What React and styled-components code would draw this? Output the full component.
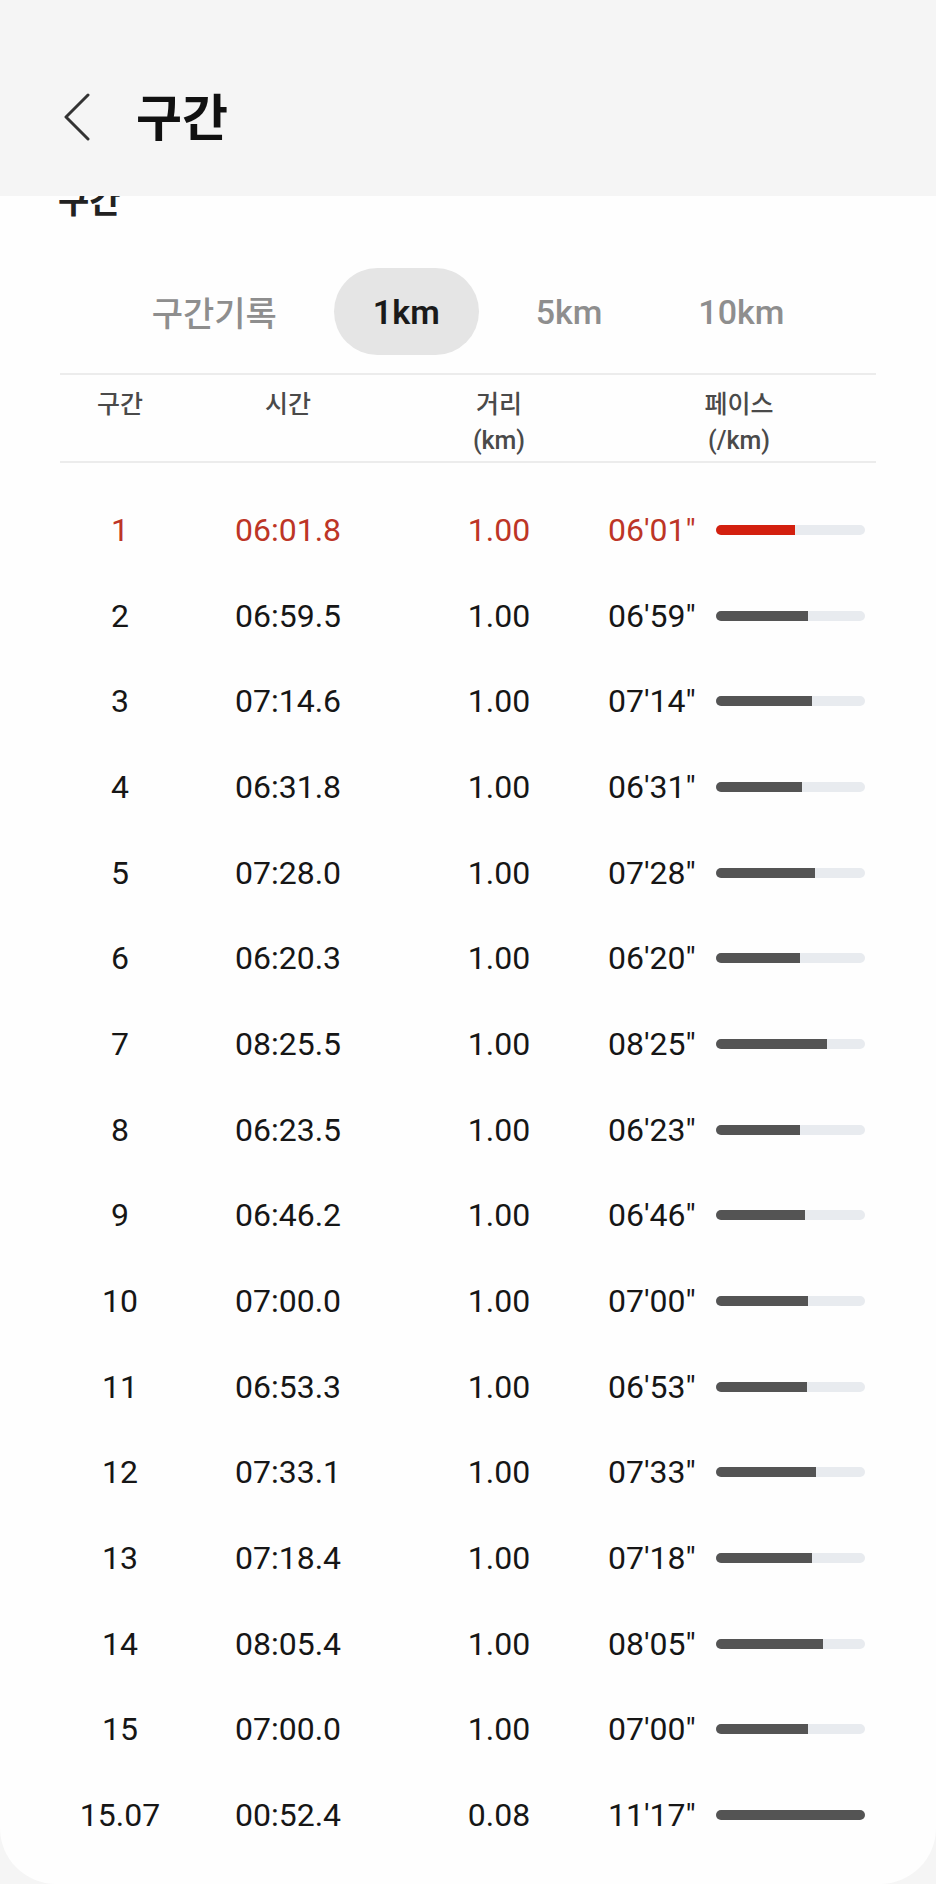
import React from 'react';
import styled, { createGlobalStyle } from 'styled-components';

const GlobalStyle = createGlobalStyle`
  body {
    margin: 0;
    background: #f5f5f5;
    font-family: Roboto, "Noto Sans CJK KR", sans-serif;
  }
`;

const Page = styled.div`
  width: 936px;
  height: 1884px;
  display: flex;
  flex-direction: column;
  background: #f5f5f5;
  overflow: hidden;
`;

const AppBar = styled.header`
  height: 196px;
  box-sizing: border-box;
  flex: none;
  display: flex;
  align-items: center;
  padding: 42px 0 0 64px;
  background: #f5f5f5;
  position: relative;
  z-index: 1;
`;

const BackButton = styled.button`
  border: 0;
  background: none;
  padding: 0;
  display: flex;
  margin-top: -4px;
`;

const Title = styled.h1`
  margin: 0 0 0 46px;
  font-size: 50px;
  font-weight: 700;
  color: #111;
  line-height: 1;
`;

const Card = styled.main`
  flex: 1;
  background: #fefefe;
  border-radius: 0 0 56px 56px;
  overflow: hidden;
`;

const SectionTitle = styled.h2`
  margin: -15px 0 0 58px;
  font-size: 34px;
  line-height: 40px;
  font-weight: 700;
  color: #222;
`;

const Tabs = styled.div`
  margin-top: 47px;
  display: flex;
  justify-content: center;
  gap: 18px;
`;

const Tab = styled.div`
  height: 87px;
  padding: 0 39px;
  display: flex;
  align-items: center;
  border-radius: 44px;
  font-size: 34px;
  font-weight: ${({ $active }) => ($active ? 600 : 500)};
  color: ${({ $active }) => ($active ? '#1a1a1a' : '#8e8e8e')};
  background: ${({ $active }) => ($active ? '#e5e5e5' : 'transparent')};
`;

const Divider = styled.hr`
  margin: 0 60px;
  border: 0;
  height: 2px;
  background: #ececec;
`;

const TopDivider = styled(Divider)`
  margin-top: 18px;
`;

const Grid = styled.div`
  display: grid;
  grid-template-columns: 120px 216px 206px 1fr;
  margin: 0 60px;
`;

const HeadRow = styled(Grid)`
  height: 86px;
  padding-top: 12px;
  box-sizing: border-box;
  font-size: 25px;
  font-weight: 500;
  line-height: 36px;
  color: #4a4a4a;
  text-align: center;
`;

const Rows = styled.div`
  padding-top: 24px;
`;

const Row = styled(Grid)`
  height: 85.7px;
  align-items: center;
  font-size: 32px;
  color: ${({ $best }) => ($best ? '#bd3526' : '#161616')};
`;

const Cell = styled.div`
  text-align: center;
`;

const PaceCell = styled.div`
  display: flex;
  align-items: center;
  padding-left: 6px;
`;

const PaceText = styled.span`
  width: 87px;
  white-space: nowrap;
`;

const Track = styled.div`
  margin-left: 21px;
  width: 149px;
  height: 10px;
  border-radius: 5px;
  background: #e8ebef;
  overflow: hidden;
`;

const Fill = styled.div`
  height: 100%;
  background: ${({ $best }) => ($best ? '#d3200f' : '#545454')};
`;

const splits = [
  ['1', '06:01.8', '1.00', 6, 1],
  ['2', '06:59.5', '1.00', 6, 59],
  ['3', '07:14.6', '1.00', 7, 14],
  ['4', '06:31.8', '1.00', 6, 31],
  ['5', '07:28.0', '1.00', 7, 28],
  ['6', '06:20.3', '1.00', 6, 20],
  ['7', '08:25.5', '1.00', 8, 25],
  ['8', '06:23.5', '1.00', 6, 23],
  ['9', '06:46.2', '1.00', 6, 46],
  ['10', '07:00.0', '1.00', 7, 0],
  ['11', '06:53.3', '1.00', 6, 53],
  ['12', '07:33.1', '1.00', 7, 33],
  ['13', '07:18.4', '1.00', 7, 18],
  ['14', '08:05.4', '1.00', 8, 5],
  ['15', '07:00.0', '1.00', 7, 0],
  ['15.07', '00:52.4', '0.08', 11, 17],
];

const pad = n => String(n).padStart(2, '0');

const App = () => {
  const paces = splits.map(s => s[3] * 60 + s[4]);
  const slowest = Math.max(...paces);

  return (
    <Page>
      <GlobalStyle />
      <AppBar>
        <BackButton aria-label="뒤로">
          <svg width="26" height="48" viewBox="0 0 26 48">
            <path d="M24 2 L2 24 L24 46" fill="none" stroke="#333" strokeWidth="3" strokeLinecap="round" strokeLinejoin="round" />
          </svg>
        </BackButton>
        <Title>구간</Title>
      </AppBar>
      <Card>
        <SectionTitle>구간</SectionTitle>
        <Tabs>
          <Tab>구간기록</Tab>
          <Tab $active>1km</Tab>
          <Tab>5km</Tab>
          <Tab>10km</Tab>
        </Tabs>
        <TopDivider />
        <HeadRow>
          <div>구간</div>
          <div>시간</div>
          <div>거리<br />(km)</div>
          <div>페이스<br />(/km)</div>
        </HeadRow>
        <Divider />
        <Rows>
          {splits.map(([no, time, dist, m, s], i) => (
            <Row key={no} $best={i === 0}>
              <Cell>{no}</Cell>
              <Cell>{time}</Cell>
              <Cell>{dist}</Cell>
              <PaceCell>
                <PaceText>{pad(m)}'{pad(s)}"</PaceText>
                <Track>
                  <Fill $best={i === 0} style={{ width: `${(paces[i] / slowest) * 100}%` }} />
                </Track>
              </PaceCell>
            </Row>
          ))}
        </Rows>
      </Card>
    </Page>
  );
};

export default App;
